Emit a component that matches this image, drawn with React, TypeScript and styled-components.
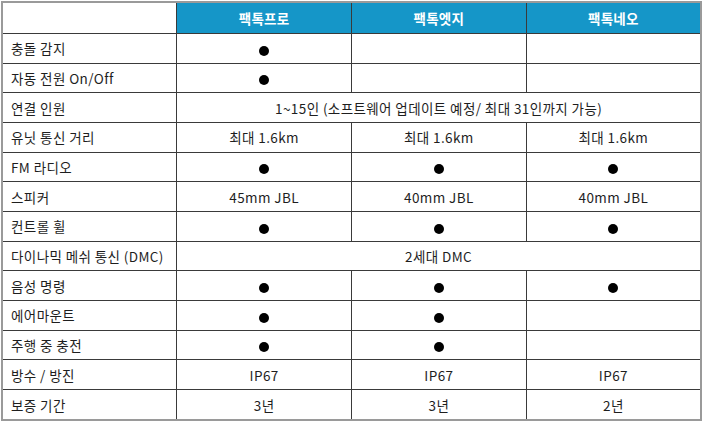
import React from "react";
import styled, { createGlobalStyle } from "styled-components";

const GlobalStyle = createGlobalStyle`
  html, body {
    margin: 0;
    padding: 0;
    background: #ffffff;
  }
  body {
    font-family: "Noto Sans CJK KR", "Noto Sans", sans-serif;
    color: #1e1e1e;
  }
`;

const Wrapper = styled.div`
  padding: 1px;
  width: 703px;
  box-sizing: border-box;
`;

const Table = styled.table`
  width: 701px;
  height: 420px;
  table-layout: fixed;
  border-collapse: collapse;
  border: 2px solid #9a9a9a;
`;

const HeadCell = styled.th<{ $blank?: boolean }>`
  height: 30px;
  padding: 0;
  background: ${(p) => (p.$blank ? "#ffffff" : "#1596c8")};
  color: #ffffff;
  font-size: 13.5px;
  font-weight: 700;
  letter-spacing: 0.3px;
  text-align: center;
  border: 1px solid #3a3a3a;
  border-top-color: #9a9a9a;
`;

const LabelCell = styled.td`
  padding: 0 0 0 8px;
  font-size: 13.5px;
  letter-spacing: 0.4px;
  text-align: left;
  border: 1px solid #3a3a3a;
  border-left-color: #9a9a9a;
  white-space: nowrap;
`;

const ValueCell = styled.td`
  padding: 0;
  font-size: 13.5px;
  letter-spacing: 0.4px;
  text-align: center;
  border: 1px solid #3a3a3a;
  white-space: nowrap;
`;

const Dot = styled.span`
  display: inline-block;
  width: 10px;
  height: 10px;
  border-radius: 50%;
  background: #000000;
  vertical-align: middle;
`;

type Value = string | boolean;
type Row = { label: string; values?: Value[]; span?: string };

const models = ["팩톡프로", "팩톡엣지", "팩톡네오"];

const rows: Row[] = [
  { label: "충돌 감지", values: [true, "", ""] },
  { label: "자동 전원 On/Off", values: [true, "", ""] },
  { label: "연결 인원", span: "1~15인 (소프트웨어 업데이트 예정/ 최대 31인까지 가능)" },
  { label: "유닛 통신 거리", values: ["최대 1.6km", "최대 1.6km", "최대 1.6km"] },
  { label: "FM 라디오", values: [true, true, true] },
  { label: "스피커", values: ["45mm JBL", "40mm JBL", "40mm JBL"] },
  { label: "컨트롤 휠", values: [true, true, true] },
  { label: "다이나믹 메쉬 통신 (DMC)", span: "2세대 DMC" },
  { label: "음성 명령", values: [true, true, true] },
  { label: "에어마운트", values: [true, true, ""] },
  { label: "주행 중 충전", values: [true, true, ""] },
  { label: "방수 / 방진", values: ["IP67", "IP67", "IP67"] },
  { label: "보증 기간", values: ["3년", "3년", "2년"] },
];

export default function App() {
  return (
    <>
      <GlobalStyle />
      <Wrapper>
        <Table>
          <thead>
            <tr>
              <HeadCell $blank />
              {models.map((m) => (
                <HeadCell key={m}>{m}</HeadCell>
              ))}
            </tr>
          </thead>
          <tbody>
            {rows.map((row) => (
              <tr key={row.label}>
                <LabelCell>{row.label}</LabelCell>
                {row.span ? (
                  <ValueCell colSpan={3}>{row.span}</ValueCell>
                ) : (
                  row.values!.map((v, i) => (
                    <ValueCell key={i}>{v === true ? <Dot /> : v}</ValueCell>
                  ))
                )}
              </tr>
            ))}
          </tbody>
        </Table>
      </Wrapper>
    </>
  );
}
